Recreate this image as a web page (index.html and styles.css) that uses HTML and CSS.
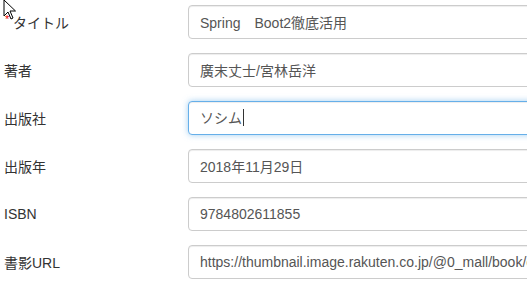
FILE: index.html
```html
<!DOCTYPE html>
<html lang="ja">
<head>
    <meta charset="UTF-8">
    <meta name="viewport" content="width=device-width, initial-scale=1.0">
    <title>書籍登録</title>
    <link rel="stylesheet" href="styles.css">
</head>
<body>
    <form class="book-form">
        <div class="form-group">
            <label class="control-label required">タイトル</label>
            <input class="form-control" type="text" value="Spring　Boot2徹底活用">
        </div>
        <div class="form-group">
            <label class="control-label">著者</label>
            <input class="form-control" type="text" value="廣末丈士/宮林岳洋">
        </div>
        <div class="form-group">
            <label class="control-label">出版社</label>
            <div class="form-control focused">ソシム<span class="caret"></span></div>
        </div>
        <div class="form-group">
            <label class="control-label">出版年</label>
            <input class="form-control" type="text" value="2018年11月29日">
        </div>
        <div class="form-group">
            <label class="control-label">ISBN</label>
            <input class="form-control" type="text" value="9784802611855">
        </div>
        <div class="form-group">
            <label class="control-label">書影URL</label>
            <input class="form-control" type="text" value="https://thumbnail.image.rakuten.co.jp/@0_mall/book/cabinet/1855/9784802611855.jpg">
        </div>
    </form>

    <svg class="pointer" width="14" height="22" viewBox="0 0 14 22">
        <path d="M1 1 L1 17 L5 13 L8 20 L10 19 L7 12 L12.5 12 Z" fill="#fff" stroke="#000" stroke-width="1"/>
    </svg>
</body>
</html>
```

FILE: styles.css
```css
body {
    margin: 0;
    padding: 0;
    background: #fff;
    font-family: "Liberation Sans", Arial, "Noto Sans CJK JP", sans-serif;
    font-size: 14px;
    color: #333;
    overflow: hidden;
}

.book-form {
    padding-top: 5px;
    overflow: hidden;
}

.form-group {
    display: flex;
    align-items: center;
    margin-bottom: 14px;
}

.control-label {
    width: 184px;
    padding-left: 4px;
    flex-shrink: 0;
    position: relative;
}

.required {
    padding-left: 13px;
    width: 175px;
}

.required::before {
    content: "*";
    position: absolute;
    left: 5px;
    top: 2px;
    color: #e00;
    font-size: 11px;
    line-height: 1;
}

.form-control {
    box-sizing: border-box;
    flex: 1;
    min-width: 0;
    height: 34px;
    margin-right: -20px;
    padding: 6px 11px;
    font-family: inherit;
    font-size: 14px;
    line-height: 20px;
    color: #555;
    background: #fff;
    border: 1px solid #ccc;
    border-radius: 4px;
    box-shadow: inset 0 1px 1px rgba(0, 0, 0, 0.075);
    outline: none;
}

.form-control.focused {
    border-color: #66afe9;
    box-shadow: inset 0 1px 1px rgba(0, 0, 0, 0.075), 0 0 6px rgba(102, 175, 233, 0.6);
}

.caret {
    display: inline-block;
    width: 1px;
    height: 17px;
    margin-left: 1px;
    vertical-align: -3px;
    background: #333;
}

.pointer {
    position: absolute;
    left: 3px;
    top: -1px;
}
```
